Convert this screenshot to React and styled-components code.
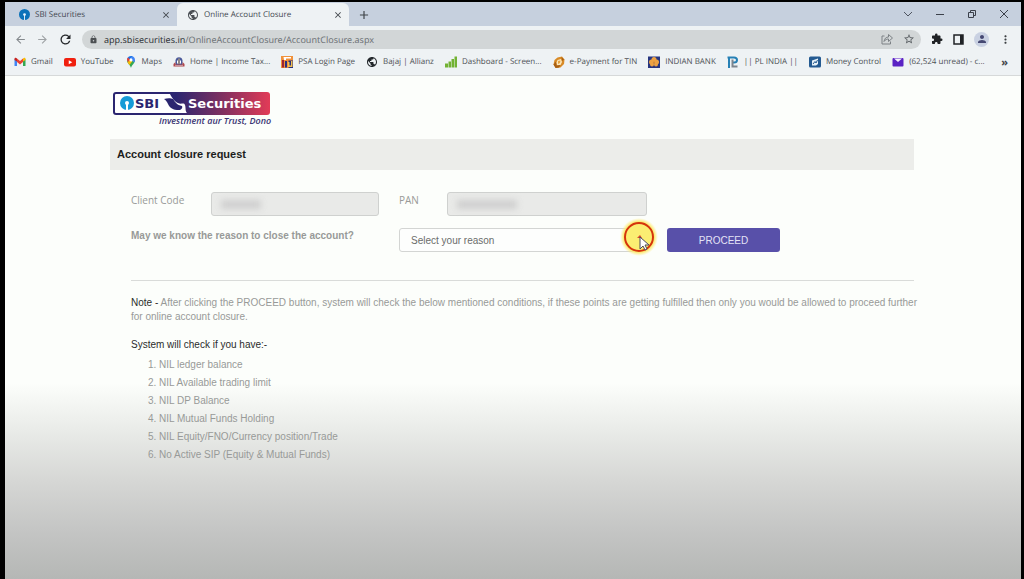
import React, { useState } from "react";
import styled, { createGlobalStyle, css } from "styled-components";
import {
  MdArrowBack,
  MdArrowForward,
  MdRefresh,
  MdLock,
  MdStarBorder,
  MdExtension,
  MdPerson,
  MdMoreVert,
  MdPublic,
  MdClose,
  MdAdd,
} from "react-icons/md";

const uiFont = `"Open Sans", "Noto Sans", sans-serif`;
const pageFont = `"Liberation Sans", Arial, sans-serif`;
const toolbarBg = "#eef2f4";
const purple = "#5850a9";

const bookmarks = [
  { name: "Gmail", icon: <GmailIcon /> },
  { name: "YouTube", icon: <YouTubeIcon /> },
  { name: "Maps", icon: <MapsIcon /> },
  { name: "Home | Income Tax...", icon: <IncomeTaxIcon /> },
  { name: "PSA Login Page", icon: <PsaIcon /> },
  { name: "Bajaj | Allianz", icon: <MdPublic size={12} color="#23272b" /> },
  { name: "Dashboard - Screen...", icon: <BarsIcon /> },
  { name: "e-Payment for TIN", icon: <TinIcon /> },
  { name: "INDIAN BANK", icon: <IndianBankIcon /> },
  { name: "|| PL INDIA ||", icon: <PlIcon /> },
  { name: "Money Control", icon: <MoneyControlIcon /> },
  { name: "(62,524 unread) - c...", icon: <MailIcon /> },
];

const conditions = [
  "NIL ledger balance",
  "NIL Available trading limit",
  "NIL DP Balance",
  "NIL Mutual Funds Holding",
  "NIL Equity/FNO/Currency position/Trade",
  "No Active SIP (Equity & Mutual Funds)",
];

function GmailIcon() {
  return (
    <svg width="12" height="12" viewBox="0 0 24 24">
      <path fill="#4285f4" d="M1 20V6l5 4v10z" />
      <path fill="#34a853" d="M18 20V10l5-4v14z" />
      <path fill="#ea4335" d="M6 12V5l6 5 6-5v7l-6 5z" />
      <path fill="#c5221f" d="M1 6c0-3 3-3 5-1v6L1 8z" />
      <path fill="#fbbc04" d="M23 6c0-3-3-3-5-1v6l5-3z" />
    </svg>
  );
}

function YouTubeIcon() {
  return (
    <svg width="12" height="12" viewBox="0 0 24 24">
      <rect x="0" y="4" width="24" height="17" rx="4" fill="#f0200f" />
      <path d="M9.500 8.500v8l7-4z" fill="#fff" />
    </svg>
  );
}

function MapsIcon() {
  return (
    <svg width="12" height="12" viewBox="0 0 24 24">
      <path fill="#34a853" d="M12 24C11 18 4 15 4 8.500L20 8c0 7-7 10-8 16z" />
      <path fill="#fbbc04" d="M5 12l6-6 4 4-6 8c-2-2-3-4-4-6z" />
      <path fill="#4285f4" d="M12 0c4 0 8 3 8 8 0 2-1 4-2 5l-5-5z" />
      <path fill="#1a73e8" d="M12 0l3 .5-8 9-3-1C4 3 8 0 12 0z" />
      <path fill="#ea4335" d="M6 3l4 4-4 5c-3-4-2-7 0-9z" />
      <circle cx="12" cy="8" r="3" fill="#fff" />
    </svg>
  );
}

function IncomeTaxIcon() {
  return (
    <svg width="12" height="12" viewBox="0 0 24 24">
      <path fill="#4b5a9b" d="M5 18V9c0-9 14-9 14 0v9z" />
      <path fill="#fff" d="M8 15V9h2v6zM14 15V9h2v6z" />
      <path fill="#d8b370" d="M11 5h2v11h-2z" />
      <path fill="#b0474b" d="M1 16l4-4v5h14v-5l4 4v5H1z" />
      <path fill="#e4e1ea" d="M4 19h16v1H4z" />
    </svg>
  );
}

function PsaIcon() {
  return (
    <svg width="12" height="12" viewBox="0 0 24 24">
      <rect width="24" height="24" fill="#f0913a" />
      <path fill="#28317f" d="M15 9h9v15h-9z" />
      <path fill="#9d2535" d="M2 8h4v15H2z" />
      <path fill="#28317f" d="M8 10h4v13H8z" />
      <path fill="#fff" d="M5 2h15v3H10v3H6z" />
      <path fill="#f3c04f" d="M14 12h3v7h3v-9h3v12h-9z" />
    </svg>
  );
}

function BarsIcon() {
  return (
    <svg width="12" height="12" viewBox="0 0 24 24">
      <path
        fill="#72b233"
        d="M0 15h6v8H0zM7 11h5v12H7zM13 6h5v17h-5zM19 1h5v22h-5z"
      />
    </svg>
  );
}

function TinIcon() {
  return (
    <svg width="12" height="12" viewBox="0 0 24 24">
      <path
        fill="#d88a26"
        d="M9 3l9-2 5 6-1 9-7 7-9 1-5-7 2-9z"
      />
      <path fill="#fbe6ba" d="M9 8l7-2 2 6-3 6-7 1-1-6z" />
      <path fill="#a85f14" d="M1 17l5-6 1 8 8-1-3 5-7 1zM17 2l5 5-4 3z" />
      <path fill="#e7a341" d="M10 10l5-1-1 5-4 2z" />
    </svg>
  );
}

function IndianBankIcon() {
  return (
    <svg width="12" height="12" viewBox="0 0 24 24">
      <rect y="1" width="24" height="23" fill="#27357f" />
      <g fill="#eda242">
        <circle cx="12" cy="7" r="5" />
        <circle cx="7" cy="12" r="5" />
        <circle cx="17" cy="12" r="5" />
        <circle cx="8" cy="17" r="4" />
        <circle cx="16" cy="17" r="4" />
      </g>
      <circle cx="12" cy="13" r="2" fill="#d58a3c" />
    </svg>
  );
}

function PlIcon() {
  return (
    <svg width="12" height="12" viewBox="0 0 24 24" fill="none" strokeWidth="4">
      <path stroke="#2680b5" d="M4 24V4M1 3h13c8 0 8 10 0 10h-3" />
      <path stroke="#7d858d" d="M11 7v14h10" />
    </svg>
  );
}

function MoneyControlIcon() {
  return (
    <svg width="12" height="12" viewBox="0 0 24 24">
      <rect y="1" width="24" height="22" rx="3" fill="#245a91" />
      <path fill="#e8f2f8" d="M6 9l12-4v11l-4 3H6z" />
      <path stroke="#245a91" strokeWidth="2" fill="none" d="M8 16l4-5 2 3 3-6" />
    </svg>
  );
}

function MailIcon() {
  return (
    <svg width="12" height="12" viewBox="0 0 24 24">
      <rect x="1" y="4" width="22" height="17" rx="2" fill="#5a22c4" />
      <path fill="#f4f0fc" d="M4 5h16l-8 7z" />
    </svg>
  );
}

function SbiMark({ size }) {
  return (
    <svg width={size} height={size} viewBox="0 0 24 24">
      <circle cx="12" cy="12" r="12" fill="#0b72b9" />
      <circle cx="12" cy="12" r="3" fill="#e8f4fb" />
      <path fill="#e8f4fb" d="M11 13h2v11h-2z" />
    </svg>
  );
}

function ShareIcon() {
  return (
    <svg
      width="12"
      height="12"
      viewBox="0 0 24 24"
      fill="none"
      stroke="#7c8185"
      strokeWidth="2"
    >
      <path d="M7 6H2v16h17v-5" />
      <path d="M6 17c1-6 4-9 9-9V3l8 7-8 7v-5c-4 0-6 1-9 5z" />
    </svg>
  );
}

function SbiLogo() {
  return (
    <svg width="160" height="36" viewBox="0 0 160 36" role="img">
      <defs>
        <linearGradient id="badge" x1="0" x2="1">
          <stop offset="0.4" stopColor="#2b2670" />
          <stop offset="0.7" stopColor="#80305f" />
          <stop offset="1" stopColor="#e23b57" />
        </linearGradient>
      </defs>
      <rect x="1" y="1" width="157" height="23" rx="3" fill="url(#badge)" />
      <path
        d="M4 3h54c2 4 5 8 8 9 3 2 6-1 7 2 1 3 0 6 2 8H4q-1 0-1-1V4q0-1 1-1z"
        fill="#fff"
      />
      <path
        d="M52 8c3-1 7-1 9 0 2 3 4 6 9 7 1 2-1 4-3 4-6 0-9-2-11-6-1-2-2-4-4-5z"
        fill="#2b2670"
      />
      <circle cx="15" cy="12" r="7" fill="#169bd7" />
      <circle cx="15" cy="12" r="2" fill="#fff" />
      <path d="M14 13h2v7h-2z" fill="#fff" />
      <text
        x="23"
        y="17"
        fontFamily="DejaVu Sans"
        fontWeight="700"
        fontSize="13"
        fill="#2b2670"
      >
        SBI
      </text>
      <text
        x="76"
        y="17"
        fontFamily="DejaVu Sans"
        fontWeight="700"
        fontSize="13"
        fill="#fff"
      >
        Securities
      </text>
      <text
        x="47"
        y="33"
        fontFamily="Open Sans"
        fontWeight="600"
        fontStyle="italic"
        fontSize="9"
        fill="#3a3573"
      >
        Investment aur Trust, Dono
      </text>
    </svg>
  );
}

function ClickPointer() {
  return (
    <Pointer width="38" height="38" viewBox="0 0 38 38">
      <defs>
        <radialGradient id="glow">
          <stop offset="0.8" stopColor="#fbe96e" />
          <stop offset="1" stopColor="#fdf08e" stopOpacity="0" />
        </radialGradient>
      </defs>
      <circle cx="19" cy="19" r="19" fill="url(#glow)" />
      <circle cx="19" cy="19" r="14" fill="#fbee72" stroke="#d5330c" strokeWidth="2" />
      <path d="M17 20l3-3 2 3z" fill="#d9492b" />
      <path
        d="M20 19v12l3-3 2 4 2-1-2-4h4z"
        fill="#fff"
        stroke="#4b4b5c"
        strokeLinejoin="round"
      />
    </Pointer>
  );
}

function App() {
  const [reason, setReason] = useState("");

  function renderTabs() {
    return (
      <TabStrip>
        <Tab>
          <SbiMark size={11} />
          <TabTitle>SBI Securities</TabTitle>
          <IconButton aria-label="Close SBI Securities">
            <MdClose size={10} />
          </IconButton>
        </Tab>
        <Tab $active>
          <MdPublic size={12} color="#4b5055" />
          <TabTitle>Online Account Closure</TabTitle>
          <IconButton aria-label="Close Online Account Closure">
            <MdClose size={10} />
          </IconButton>
        </Tab>
        <NewTab aria-label="New tab">
          <MdAdd size={14} />
        </NewTab>
        <WindowControls>
          <IconButton aria-label="Search tabs">
            <svg width="10" height="10" viewBox="0 0 10 10" fill="none" stroke="#4f5560">
              <path d="M1 3l4 4 4-4" />
            </svg>
          </IconButton>
          <IconButton aria-label="Minimize">
            <svg width="10" height="10" viewBox="0 0 10 10" stroke="#3b404a">
              <path d="M1 5.500h8" />
            </svg>
          </IconButton>
          <IconButton aria-label="Restore">
            <svg width="10" height="10" viewBox="0 0 10 10" fill="none" stroke="#3b404a">
              <path d="M1.500 3.500h5v5h-5zM3.500 3.500v-2h5v5h-2" />
            </svg>
          </IconButton>
          <IconButton aria-label="Close window">
            <svg width="10" height="10" viewBox="0 0 10 10" stroke="#3b404a">
              <path d="M1 1l8 8M9 1l-8 8" />
            </svg>
          </IconButton>
        </WindowControls>
      </TabStrip>
    );
  }

  function renderToolbar() {
    return (
      <Toolbar>
        <NavButtons>
          <IconButton aria-label="Back">
            <MdArrowBack size={13} color="#858a8e" />
          </IconButton>
          <IconButton aria-label="Forward">
            <MdArrowForward size={13} color="#9ea2a5" />
          </IconButton>
          <IconButton aria-label="Reload">
            <MdRefresh size={15} color="#26292c" />
          </IconButton>
        </NavButtons>
        <AddressBar>
          <MdLock size={9} color="#4c5053" />
          <Url>
            <UrlHost>app.sbisecurities.in</UrlHost>
            /OnlineAccountClosure/AccountClosure.aspx
          </Url>
          <IconButton aria-label="Share">
            <ShareIcon />
          </IconButton>
          <IconButton aria-label="Bookmark this tab">
            <MdStarBorder size={12} color="#5a5f63" />
          </IconButton>
        </AddressBar>
        <ToolbarActions>
          <IconButton aria-label="Extensions">
            <MdExtension size={12} color="#202326" />
          </IconButton>
          <IconButton aria-label="Side panel">
            <svg width="11" height="11" viewBox="0 0 11 11">
              <rect x="1" y="1" width="9" height="9" fill="none" stroke="#202326" strokeWidth="1.500" />
              <path d="M7 1h3v9H7z" fill="#202326" />
            </svg>
          </IconButton>
          <Avatar aria-label="Profile">
            <MdPerson size={12} color="#454872" />
          </Avatar>
          <IconButton aria-label="Menu">
            <MdMoreVert size={13} color="#3b3f42" />
          </IconButton>
        </ToolbarActions>
      </Toolbar>
    );
  }

  function renderBookmarks() {
    return (
      <BookmarkBar>
        {bookmarks.map((bookmark) => (
          <Bookmark href="#" key={bookmark.name}>
            {bookmark.icon}
            {bookmark.name}
          </Bookmark>
        ))}
        <MoreBookmarks aria-label="More bookmarks">»</MoreBookmarks>
      </BookmarkBar>
    );
  }

  return (
    <Screen>
      <GlobalStyle />
      <Browser>
        {renderTabs()}
        {renderToolbar()}
        {renderBookmarks()}
      </Browser>
      <Page>
        <LogoLink href="#" aria-label="SBI Securities">
          <SbiLogo />
        </LogoLink>
        <Title>Account closure request</Title>
        <Content>
          <Form onSubmit={(e) => e.preventDefault()}>
            <Field>
              <Label htmlFor="clientCode">Client Code</Label>
              <MaskedBox>
                <MaskedInput id="clientCode" readOnly />
                <Smudge $width={40} />
              </MaskedBox>
            </Field>
            <Field>
              <Label htmlFor="pan" $short>
                PAN
              </Label>
              <MaskedBox>
                <MaskedInput id="pan" readOnly />
                <Smudge $width={60} />
              </MaskedBox>
            </Field>
            <Question htmlFor="reason">
              May we know the reason to close the account?
            </Question>
            <SelectBox>
              <Select
                id="reason"
                value={reason}
                onChange={(e) => setReason(e.target.value)}
              >
                <option value="">Select your reason</option>
              </Select>
              <ClickPointer />
            </SelectBox>
            <Proceed type="submit">PROCEED</Proceed>
          </Form>
          <Note>
            <Dark>Note -</Dark> After clicking the PROCEED button, system will
            check the below mentioned conditions, if these points are getting
            fulfilled then only you would be allowed to proceed further for
            online account closure.
          </Note>
          <ListTitle>System will check if you have:-</ListTitle>
          <Conditions>
            {conditions.map((condition) => (
              <li key={condition}>{condition}</li>
            ))}
          </Conditions>
        </Content>
      </Page>
    </Screen>
  );
}

const GlobalStyle = createGlobalStyle`
  * {
    box-sizing: border-box;
  }
  body {
    margin: 0;
    background: #000;
  }
  svg {
    display: block;
    flex-shrink: 0;
  }
`;

const Screen = styled.div`
  display: flex;
  flex-direction: column;
  min-height: 100vh;
  padding: 2px 3px 0 5px;
  background: #000;
  font-family: ${uiFont};
`;

const Browser = styled.header`
  text-rendering: geometricPrecision;
`;

const buttonReset = css`
  display: flex;
  align-items: center;
  justify-content: center;
  padding: 0;
  border: 0;
  background: none;
  color: #3f4449;
  cursor: pointer;
`;

const IconButton = styled.button`
  ${buttonReset}
`;

const TabStrip = styled.div`
  display: flex;
  height: 24px;
  padding-top: 1px;
  background: #c6d0de;
`;

const Tab = styled.div`
  display: flex;
  align-items: center;
  gap: 5px;
  width: 172px;
  padding: 0 6px 0 ${(props) => (props.$active ? 10 : 14)}px;
  border-radius: 6px 6px 0 0;
  background: ${(props) => (props.$active ? toolbarBg : "transparent")};
`;

const TabTitle = styled.span`
  flex: 1;
  font-size: 8px;
  color: #43474f;
  white-space: nowrap;
`;

const NewTab = styled.button`
  ${buttonReset}
  margin-left: 8px;
`;

const WindowControls = styled.div`
  display: flex;
  gap: 22px;
  margin-left: auto;
  padding: 0 12px 2px 0;
`;

const Toolbar = styled.div`
  display: flex;
  align-items: center;
  height: 26px;
  padding: 0 9px;
  background: ${toolbarBg};
`;

const NavButtons = styled.div`
  display: flex;
  gap: 9px;
  margin-right: 9px;
`;

const AddressBar = styled.div`
  display: flex;
  flex: 1;
  align-items: center;
  gap: 10px;
  height: 19px;
  padding: 0 6px 0 7px;
  border-radius: 10px;
  background: #d2d6d7;
`;

const Url = styled.span`
  flex: 1;
  margin-left: -4px;
  font-family: "Noto Sans", sans-serif;
  font-size: 9px;
  color: #6f7478;
  white-space: nowrap;
`;

const UrlHost = styled.span`
  color: #33373b;
`;

const ToolbarActions = styled.div`
  display: flex;
  align-items: center;
  gap: 10px;
  margin-left: 10px;
`;

const Avatar = styled.button`
  ${buttonReset}
  width: 15px;
  height: 15px;
  border-radius: 50%;
  background: #c9d1e2;
`;

const BookmarkBar = styled.nav`
  display: flex;
  align-items: center;
  gap: 11px;
  height: 24px;
  padding: 0 13px 4px 9px;
  border-bottom: 1px solid #d6d9d9;
  background: ${toolbarBg};
`;

const Bookmark = styled.a`
  display: flex;
  align-items: center;
  gap: 5px;
  font-size: 8px;
  color: #4d5154;
  white-space: nowrap;
  text-decoration: none;
`;

const MoreBookmarks = styled.button`
  ${buttonReset}
  margin-left: auto;
  font: 700 11px ${uiFont};
`;

const Page = styled.main`
  flex: 1;
  padding: 15px 107px 24px 105px;
  background: linear-gradient(
    #fcfefb calc(100% - 196px),
    #e9ebe8 calc(100% - 148px),
    #d5d6d4 calc(100% - 96px),
    #c4c5c4 calc(100% - 48px),
    #b5b7b5
  );
  font-family: ${pageFont};
  font-size: 10px;
  line-height: 14px;
  color: #989a98;
`;

const LogoLink = styled.a`
  display: block;
  width: 160px;
  margin-left: 2px;
`;

const Title = styled.h1`
  margin: 12px 0 0;
  padding: 0 7px;
  background: #ecedea;
  font-size: 11px;
  line-height: 31px;
  color: #1c1d1c;
`;

const Content = styled.div`
  padding-left: 21px;
`;

const Form = styled.form`
  display: grid;
  grid-template-columns: 248px 248px 113px;
  gap: 12px 20px;
  padding: 22px 0 28px;
  border-bottom: 1px solid #d9dbd9;
`;

const Field = styled.div`
  display: flex;
`;

const Label = styled.label`
  flex: none;
  width: ${(props) => (props.$short ? 48 : 80)}px;
  font-family: ${uiFont};
  line-height: 16px;
`;

const Question = styled.label`
  grid-column: 1;
  font-weight: 700;
  line-height: 16px;
  white-space: nowrap;
`;

const MaskedBox = styled.div`
  position: relative;
  flex: 1;
`;

const controlCss = css`
  display: block;
  width: 100%;
  height: 24px;
  border: 1px solid #d3d5d3;
  border-radius: 3px;
  font: 10px ${pageFont};
`;

const MaskedInput = styled.input`
  ${controlCss}
  border-color: #cfd1cf;
  background: #e9eae8;
`;

const Smudge = styled.span`
  position: absolute;
  top: 8px;
  left: 10px;
  width: ${(props) => props.$width}px;
  height: 9px;
  background: #cfcfcf;
  filter: blur(3px);
`;

const SelectBox = styled.div`
  position: relative;
`;

const Select = styled.select`
  ${controlCss}
  appearance: none;
  padding: 0 11px;
  background: #fdfefd;
  color: #6b6d6b;
`;

const Pointer = styled.svg`
  position: absolute;
  top: -10px;
  right: -11px;
  pointer-events: none;
`;

const Proceed = styled.button`
  height: 24px;
  border: 0;
  border-radius: 3px;
  background: ${purple};
  font: 10px ${pageFont};
  color: #e4e2f5;
  cursor: pointer;
`;

const Note = styled.p`
  margin: 15px -4px 14px 0;
`;

const Dark = styled.span`
  color: #2b2c2b;
`;

const ListTitle = styled.h2`
  margin: 0 0 4px;
  font-size: 10px;
  font-weight: 400;
  line-height: 14px;
  color: #2b2c2b;
`;

const Conditions = styled.ol`
  margin: 0;
  padding-left: 28px;
  line-height: 18px;
`;

export default App;
